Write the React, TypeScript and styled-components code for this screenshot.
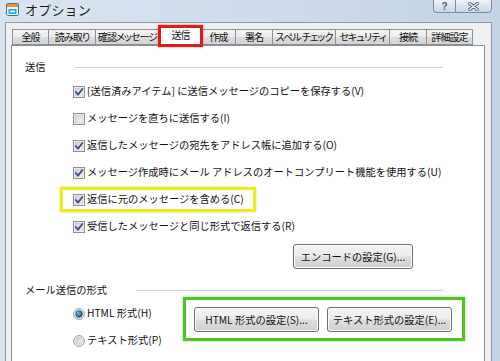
import styled, { createGlobalStyle } from "styled-components";

const GlobalStyle = createGlobalStyle`
  html, body {
    margin: 0;
    padding: 0;
  }
  body {
    font-family: "Noto Sans CJK JP", "Noto Sans", sans-serif;
    color: #111;
  }
`;

const Window = styled.div`
  position: relative;
  width: 500px;
  height: 361px;
  overflow: hidden;
  display: flex;
  flex-direction: column;
  background: linear-gradient(90deg, #d9e4f1 0%, #cddbeb 60%, #c4d3e5 100%);
`;

const TitleBar = styled.div`
  position: relative;
  height: 22px;
  display: flex;
  align-items: center;
  padding-left: 6px;
  gap: 6px;
  flex-shrink: 0;
`;

const Title = styled.span`
  font-size: 13px;
  line-height: 1;
  letter-spacing: 0.2px;
  color: #1b1b1b;
  margin-top: -3px;
  text-shadow: 0 0 6px rgba(255, 255, 255, 0.9);
`;

const CaptionButtons = styled.div`
  position: absolute;
  top: -1px;
  right: 8px;
  display: flex;
`;

const CaptionButton = styled.div<{ $w: number; $first?: boolean }>`
  width: ${(p) => p.$w}px;
  height: 14px;
  box-sizing: border-box;
  border: 1px solid #7d8ba0;
  ${(p) => (p.$first ? "border-right: none; border-bottom-left-radius: 4px;" : "border-bottom-right-radius: 4px;")}
  background: linear-gradient(180deg, #eef3f9 0%, #dbe4ef 50%, #cbd7e6 100%);
  display: flex;
  align-items: center;
  justify-content: center;
  font-family: "Liberation Sans", sans-serif;
  font-size: 10px;
  font-weight: bold;
  color: #4b5a70;
`;

const Client = styled.div`
  flex: 1;
  margin: 0 8px 0 5px;
  background: #f0f0f0;
  border: 1px solid #8a98ab;
  border-bottom: none;
  display: flex;
  flex-direction: column;
`;

const TabStrip = styled.div`
  display: flex;
  align-items: flex-end;
  height: 18px;
  margin: 4px 0 0 6px;
  position: relative;
  z-index: 2;
`;

const Tab = styled.div<{ $w: number; $active?: boolean }>`
  position: relative;
  width: ${(p) => p.$w}px;
  height: ${(p) => (p.$active ? 19 : 16)}px;
  margin-right: -1px;
  margin-bottom: ${(p) => (p.$active ? -1 : 0)}px;
  box-sizing: border-box;
  border: 1px solid #8c8f96;
  border-bottom: ${(p) => (p.$active ? "none" : "1px solid #8c8f96")};
  background: ${(p) =>
    p.$active ? "#ffffff" : "linear-gradient(180deg, #f4f4f4 0%, #ebebeb 50%, #dddddd 51%, #d3d3d3 100%)"};
  z-index: ${(p) => (p.$active ? 2 : 1)};
  display: flex;
  align-items: ${(p) => (p.$active ? "flex-start" : "center")};
  padding-top: ${(p) => (p.$active ? 2 : 0)}px;
  justify-content: center;
  font-size: 10px;
  letter-spacing: -0.9px;
  line-height: 1;
  font-feature-settings: "palt";
  white-space: nowrap;
  color: #111;

  ${(p) =>
    p.$active &&
    `
    &::after {
      content: "";
      position: absolute;
      left: -2px;
      right: -2px;
      top: -3px;
      bottom: -1px;
      border: 3px solid #e11b1b;
      box-shadow: 0 0 2px rgba(225, 27, 27, 0.5);
      pointer-events: none;
    }
  `}
`;

const Panel = styled.div`
  flex: 1;
  margin: 0 6px 0 5px;
  background: #ffffff;
  border: 1px solid #8c8f96;
  border-bottom: none;
  position: relative;
  z-index: 1;
  display: flex;
  flex-direction: column;
  font-size: 10.25px;
`;

const GroupHeader = styled.div<{ $top: number }>`
  display: flex;
  align-items: center;
  gap: 29px;
  width: 418px;
  height: 14px;
  margin: ${(p) => p.$top}px 0 0 13px;
`;

const GroupLabel = styled.span`
  line-height: 1;
  white-space: nowrap;
`;

const GroupLine = styled.div`
  flex: 1;
  height: 1px;
  background: #c9d0d6;
`;

const Options = styled.div`
  display: flex;
  flex-direction: column;
  margin: 4px 0 0 61px;
`;

const OptionRow = styled.div<{ $highlight?: boolean }>`
  position: relative;
  display: flex;
  align-items: center;
  gap: 2px;
  height: 27px;
  width: fit-content;
  white-space: nowrap;
  line-height: 1;

  ${(p) =>
    p.$highlight &&
    `
    &::after {
      content: "";
      position: absolute;
      left: -13px;
      right: -12px;
      top: 1px;
      bottom: 1px;
      border: 3px solid #ecec1e;
      box-shadow: 0 0 2px rgba(200, 200, 0, 0.6);
      pointer-events: none;
    }
  `}
`;

const Button = styled.button<{ $w: number }>`
  width: ${(p) => p.$w}px;
  height: 25px;
  box-sizing: border-box;
  border: 1px solid #707070;
  border-radius: 3px;
  background: linear-gradient(180deg, #f4f4f4 0%, #ececec 48%, #dedede 52%, #cfcfcf 100%);
  box-shadow: inset 0 0 0 1px #fbfbfb;
  font-family: "Noto Sans CJK JP", "Noto Sans", sans-serif;
  font-size: 10.25px;
  color: #111;
  padding: 0;
  display: flex;
  align-items: center;
  justify-content: center;
  white-space: nowrap;
`;

const EncodeRow = styled.div`
  display: flex;
  margin: 4px 0 0 281px;
`;

const FormatSection = styled.div`
  display: flex;
  align-items: flex-start;
`;

const RadioColumn = styled.div`
  width: 110px;
  display: flex;
  flex-direction: column;
  margin: 3px 0 0 61px;
`;

const HighlightBox = styled.div`
  width: 282px;
  height: 44px;
  box-sizing: border-box;
  border: 3px solid #52c226;
  box-shadow: 0 0 2px rgba(60, 170, 20, 0.6);
  display: flex;
  gap: 8px;
  padding: 7px 0 0 8px;
`;

const CheckBox = ({ checked }: { checked: boolean }) => (
  <svg width="12" height="12" viewBox="0 0 12 12" style={{ flexShrink: 0 }}>
    <defs>
      <linearGradient id="cbFill" x1="0" y1="0" x2="1" y2="1">
        <stop offset="0" stopColor="#cfcfcf" />
        <stop offset="1" stopColor="#f7f7f7" />
      </linearGradient>
    </defs>
    <rect x="0.5" y="0.5" width="11" height="11" fill="#fff" stroke="#8e8f8f" />
    <rect x="2" y="2" width="8" height="8" fill="url(#cbFill)" stroke="#b9b9b9" strokeWidth="0.6" />
    {checked && (
      <path d="M2.8 6 L5 8.6 L9.4 3" fill="none" stroke="#33508f" strokeWidth="1.8" strokeLinecap="round" strokeLinejoin="round" />
    )}
  </svg>
);

const Radio = ({ checked }: { checked: boolean }) => (
  <svg width="12" height="12" viewBox="0 0 12 12" style={{ flexShrink: 0 }}>
    <defs>
      <radialGradient id="rdOn" cx="0.4" cy="0.4" r="0.6">
        <stop offset="0" stopColor="#6fc5e4" />
        <stop offset="1" stopColor="#12567a" />
      </radialGradient>
      <linearGradient id="rdOff" x1="0" y1="0" x2="1" y2="1">
        <stop offset="0" stopColor="#cdcdcd" />
        <stop offset="1" stopColor="#f5f5f5" />
      </linearGradient>
    </defs>
    <circle cx="6" cy="6" r="5.4" fill="#f4f4f4" stroke="#8e8f8f" strokeWidth="0.9" />
    <circle cx="6" cy="6" r="3.4" fill={checked ? "url(#rdOn)" : "url(#rdOff)"} stroke={checked ? "#1d4f66" : "#b5b5b5"} strokeWidth="0.6" />
  </svg>
);

const AppIcon = () => (
  <svg width="13" height="13" viewBox="0 0 13 13" style={{ marginTop: -3 }}>
    <rect x="0.5" y="0.5" width="12" height="12" rx="1" fill="#e9f3f8" stroke="#2f7f9b" />
    <rect x="1" y="1" width="11" height="3" fill="#f08c2a" />
    <rect x="2.5" y="6" width="8" height="5" fill="#2aa7c7" />
    <rect x="4" y="7.5" width="5" height="2" fill="#d8eef5" />
  </svg>
);

const CloseGlyph = () => (
  <svg width="11" height="9" viewBox="0 0 11 9">
    <path d="M1 1 L10 8 M10 1 L1 8" stroke="#4d5b70" strokeWidth="3" strokeLinecap="round" />
    <path d="M1 1 L10 8 M10 1 L1 8" stroke="#f4f7fb" strokeWidth="1.3" strokeLinecap="round" />
  </svg>
);

const tabs = [
  { label: "全般", w: 37 },
  { label: "読み取り", w: 48 },
  { label: "確認メッセージ", w: 65 },
  { label: "送信", w: 43, active: true },
  { label: "作成", w: 35 },
  { label: "署名", w: 38 },
  { label: "スペル チェック", w: 64 },
  { label: "セキュリティ", w: 55 },
  { label: "接続", w: 38 },
  { label: "詳細設定", w: 47 },
];

const sendOptions = [
  { text: "[送信済みアイテム] に送信メッセージのコピーを保存する(V)", checked: true },
  { text: "メッセージを直ちに送信する(I)", checked: false },
  { text: "返信したメッセージの宛先をアドレス帳に追加する(O)", checked: true },
  { text: "メッセージ作成時にメール アドレスのオートコンプリート機能を使用する(U)", checked: true },
  { text: "返信に元のメッセージを含める(C)", checked: true, highlight: true },
  { text: "受信したメッセージと同じ形式で返信する(R)", checked: true },
];

const App = () => {
  return (
    <>
      <GlobalStyle />
      <Window>
        <TitleBar>
          <AppIcon />
          <Title>オプション</Title>
          <CaptionButtons>
            <CaptionButton $w={22} $first>
              ?
            </CaptionButton>
            <CaptionButton $w={37}>
              <CloseGlyph />
            </CaptionButton>
          </CaptionButtons>
        </TitleBar>
        <Client>
          <TabStrip>
            {tabs.map((t) => (
              <Tab key={t.label} $w={t.w} $active={t.active}>
                {t.label}
              </Tab>
            ))}
          </TabStrip>
          <Panel>
            <GroupHeader $top={14}>
              <GroupLabel>送信</GroupLabel>
              <GroupLine />
            </GroupHeader>
            <Options>
              {sendOptions.map((o) => (
                <OptionRow key={o.text} $highlight={o.highlight}>
                  <CheckBox checked={o.checked} />
                  <span>{o.text}</span>
                </OptionRow>
              ))}
            </Options>
            <EncodeRow>
              <Button $w={120}>エンコードの設定(G)...</Button>
            </EncodeRow>
            <GroupHeader $top={14}>
              <GroupLabel>メール送信の形式</GroupLabel>
              <GroupLine />
            </GroupHeader>
            <FormatSection>
              <RadioColumn>
                <OptionRow>
                  <Radio checked />
                  <span>HTML 形式(H)</span>
                </OptionRow>
                <OptionRow>
                  <Radio checked={false} />
                  <span>テキスト形式(P)</span>
                </OptionRow>
              </RadioColumn>
              <HighlightBox>
                <Button $w={125}>HTML 形式の設定(S)...</Button>
                <Button $w={125}>テキスト形式の設定(E)...</Button>
              </HighlightBox>
            </FormatSection>
          </Panel>
        </Client>
      </Window>
    </>
  );
};

export default App;
